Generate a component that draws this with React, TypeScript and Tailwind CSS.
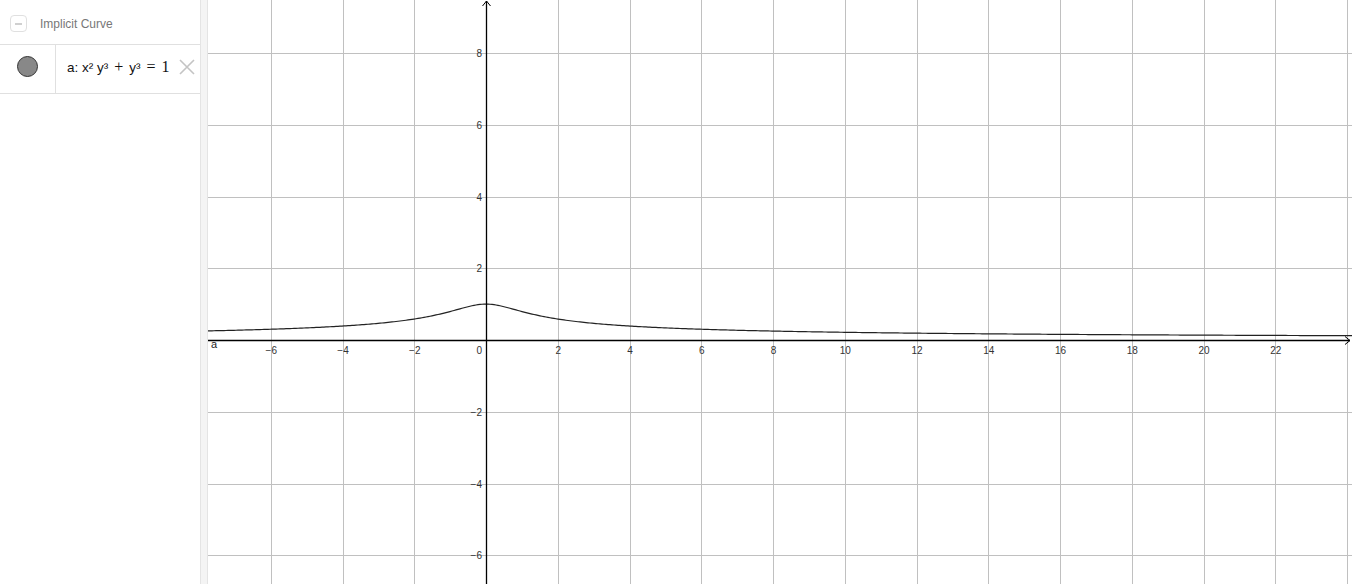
import React from "react";

const W = 1144;
const H = 584;
const OX = 278;
const OY = 340;
const U = 35.875;

function GraphView() {
  const vLines: { x: number; v: number }[] = [];
  for (let k = -4; k <= 12; k++) {
    const x = OX + k * 2 * U;
    if (x >= 0 && x <= W) vLines.push({ x, v: k * 2 });
  }
  const hLines: { y: number; v: number }[] = [];
  for (let k = -4; k <= 5; k++) {
    const y = OY - k * 2 * U;
    if (y >= 0 && y <= H) hLines.push({ y, v: k * 2 });
  }
  const pts: string[] = [];
  for (let px = 0; px <= W; px += 2) {
    const xv = (px - OX) / U;
    const yv = Math.cbrt(1 / (1 + xv * xv));
    pts.push(`${px},${(OY - yv * U).toFixed(2)}`);
  }
  const fmt = (v: number) => (v < 0 ? `\u2212${-v}` : `${v}`);
  return (
    <svg width={W} height={H} className="block" style={{ fontFamily: '"Liberation Sans", Arial, sans-serif' }}>
      {vLines.map((l) =>
        l.v === 0 ? null : (
          <line key={`v${l.v}`} x1={Math.round(l.x) + 0.5} x2={Math.round(l.x) + 0.5} y1={0} y2={H} stroke="#c0c0c0" strokeWidth={1} />
        )
      )}
      {hLines.map((l) =>
        l.v === 0 ? null : (
          <line key={`h${l.v}`} x1={0} x2={W} y1={Math.round(l.y) + 0.5} y2={Math.round(l.y) + 0.5} stroke="#c0c0c0" strokeWidth={1} />
        )
      )}
      <polyline points={pts.join(" ")} fill="none" stroke="#222" strokeWidth={1.2} />
      <line x1={0} x2={W - 2} y1={OY + 0.5} y2={OY + 0.5} stroke="#000" strokeWidth={1.3} />
      <line x1={OX + 0.5} x2={OX + 0.5} y1={1} y2={H} stroke="#000" strokeWidth={1.3} />
      <polyline points={`${OX - 3.5},6 ${OX + 0.5},1 ${OX + 4.5},6`} fill="none" stroke="#000" strokeWidth={1} />
      <polyline points={`${W - 7},${OY - 3.5} ${W - 2},${OY + 0.5} ${W - 7},${OY + 4.5}`} fill="none" stroke="#000" strokeWidth={1} />
      {vLines.map((l) =>
        l.v === 0 || l.x > W - 20 ? null : (
          <text key={`tx${l.v}`} x={l.x + 0.5} y={OY + 14} fontSize={10} fill="#333" textAnchor="middle">
            {fmt(l.v)}
          </text>
        )
      )}
      {hLines.map((l) =>
        l.v === 0 ? null : (
          <text key={`ty${l.v}`} x={OX - 4} y={l.y + 4} fontSize={10} fill="#333" textAnchor="end">
            {fmt(l.v)}
          </text>
        )
      )}
      <text x={OX - 4} y={OY + 14} fontSize={10} fill="#333" textAnchor="end">
        0
      </text>
      <text x={3} y={OY + 8} fontSize={11} fill="#222">
        a
      </text>
    </svg>
  );
}

export default function App() {
  return (
    <div className="flex h-[584px] w-[1352px] overflow-hidden bg-white" style={{ fontFamily: '"Liberation Sans", Arial, sans-serif' }}>
      <div className="flex w-[200px] flex-col bg-white">
        <div className="flex h-[45px] items-center border-b border-[#e0e0e0] pl-[10px] pt-[3px]">
          <div className="flex h-[17px] w-[17px] items-center justify-center rounded-[4px] border border-[#e0e0e0]">
            <div className="h-[2px] w-[7px] bg-[#d0d0d0]" />
          </div>
          <span className="ml-[13px] text-[12px] text-[#777]">Implicit Curve</span>
        </div>
        <div className="flex h-[49px] border-b border-[#e0e0e0]">
          <div className="flex w-[56px] items-start justify-center border-r border-[#e0e0e0] pt-[11px]">
            <div className="h-[21px] w-[21px] rounded-full border border-[#333] bg-[#888888]" />
          </div>
          <div className="flex flex-1 items-start pl-[11px] pt-[12px]">
            <span className="whitespace-nowrap text-[13.5px] leading-[20px] text-[#111]">
              a: x² y³<span className="mx-[6px] text-[16px]" style={{ fontFamily: '"Liberation Serif", serif' }}>+</span>y³<span className="mx-[6px] text-[16px]" style={{ fontFamily: '"Liberation Serif", serif' }}>=</span><span style={{ fontFamily: '"Liberation Serif", serif' }} className="text-[16px]">1</span>
            </span>
            <svg width="18" height="18" viewBox="0 0 18 18" className="ml-[8px] mt-[1px] shrink-0">
              <path d="M2 2 L16 16 M16 2 L2 16" stroke="#c4c4c4" strokeWidth="1.6" fill="none" />
            </svg>
          </div>
        </div>
      </div>
      <div className="w-[8px] border-x border-[#e4e4e4] bg-[#f4f4f4]" />
      <div className="flex-1">
        <GraphView />
      </div>
    </div>
  );
}
